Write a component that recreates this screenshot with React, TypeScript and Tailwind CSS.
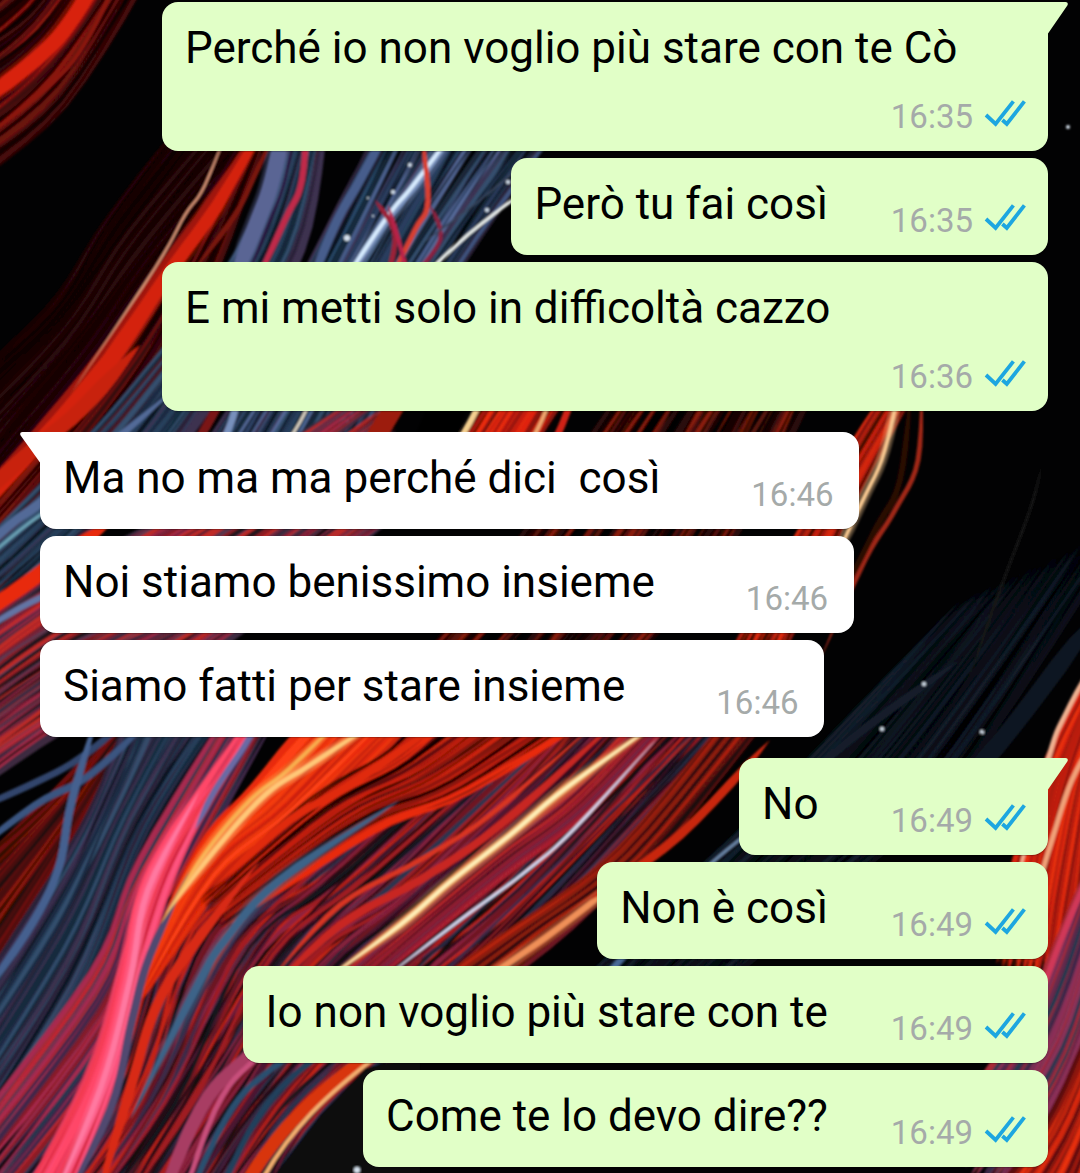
import React from "react";

type Pt = [number, number];

type Bundle = {
  from: Pt[];
  to: Pt[];
  count: number;
  width: [number, number];
  colors: string[];
};

type Strand = { pts: Pt[]; width: number; color: string; glow?: boolean };

type Message = {
  text: string;
  time: string;
  mine: boolean;
  first?: boolean;
};

const messages: Message[] = [
  { text: "Perché io non voglio più stare con te Cò", time: "16:35", mine: true, first: true },
  { text: "Però tu fai così", time: "16:35", mine: true },
  { text: "E mi metti solo in difficoltà cazzo", time: "16:36", mine: true },
  { text: "Ma no ma ma perché dici  così", time: "16:46", mine: false, first: true },
  { text: "Noi stiamo benissimo insieme", time: "16:46", mine: false },
  { text: "Siamo fatti per stare insieme", time: "16:46", mine: false },
  { text: "No", time: "16:49", mine: true, first: true },
  { text: "Non è così", time: "16:49", mine: true },
  { text: "Io non voglio più stare con te", time: "16:49", mine: true },
  { text: "Come te lo devo dire??", time: "16:49", mine: true },
];

const darkRed = ["#2a0506", "#4a0a0a", "#1a0405", "#6b120c", "#120304", "#350710"];
const red = ["#e02508", "#c41d08", "#8a1208", "#f03010", "#a81808", "#4a0a06"];
const blue = ["#3f5580", "#2a3d5e", "#566a9a", "#1a2538", "#0c1220", "#2b4f72"];
const navy = ["#1d2c42", "#283f5c", "#0d1420", "#34506e", "#2c2338", "#152c3c", "#3c3050"];
const pink = ["#e8304c", "#f04468", "#d42840", "#ff5580", "#f23a50", "#c83858"];
const mixed = ["#6e1824", "#a01c20", "#240a12", "#3a2a48", "#8c2440", "#17141f", "#c42418", "#4c1430", "#2a3550", "#0e090f"];
const faint = ["#0a1018", "#0d1622", "#060a10", "#121d2c", "#030405"];

const bundles: Bundle[] = [
  { from: [[-40, 30], [20, -15], [60, -60]], to: [[-40, 190], [65, 105], [165, -60]], count: 18, width: [4, 9], colors: [...darkRed, "#8a1208"] },
  { from: [[-50, 400], [50, 310], [110, 220], [200, 100]], to: [[-50, 530], [80, 370], [170, 250], [300, 100]], count: 24, width: [5, 9], colors: ["#1a0405", "#240608", "#120304", "#2c080a", "#0a0203"] },
  { from: [[-50, 535], [90, 372], [170, 262], [260, 110]], to: [[-50, 640], [120, 440], [200, 300], [275, 110]], count: 20, width: [4, 9], colors: darkRed.concat("#7a140c") },
  { from: [[-50, 575], [70, 460], [150, 370], [240, 250], [295, 110]], to: [[-50, 660], [150, 480], [230, 370], [300, 250], [330, 110]], count: 18, width: [5, 9], colors: [...navy, "#4a1420"] },
  { from: [[150, 530], [240, 390], [310, 262], [385, 110]], to: [[320, 530], [390, 390], [460, 262], [570, 110]], count: 28, width: [4, 9], colors: [...blue, ...navy] },
  { from: [[-50, 650], [60, 575], [200, 500], [380, 380]], to: [[-50, 810], [60, 730], [200, 660], [420, 500]], count: 34, width: [4, 8], colors: ["#7a2038", "#a82a48", "#8c1c24", "#3c2c40", "#c02c28", "#5c3850", "#24141e"] },
  { from: [[400, 680], [520, 540], [640, 370]], to: [[620, 680], [730, 540], [820, 370]], count: 22, width: [4, 9], colors: ["#140404", "#2a0808", "#8a1c08", "#050303", "#5a1208"] },
  { from: [[420, 500], [468, 425], [510, 360]], to: [[500, 500], [545, 425], [585, 360]], count: 14, width: [5, 8], colors: red },
  { from: [[725, 660], [820, 500], [900, 370]], to: [[780, 660], [855, 500], [925, 370]], count: 10, width: [4, 8], colors: ["#c82008", "#8a1608", "#3a0806", "#e02c10"] },
  { from: [[-50, 890], [60, 790], [150, 690]], to: [[-50, 1110], [70, 870], [150, 690]], count: 24, width: [6, 11], colors: ["#2c0806", "#4a0c08", "#701008", "#20080a", "#8c1808"] },
  { from: [[-50, 1040], [50, 880], [95, 800], [135, 690]], to: [[-50, 1200], [75, 1010], [150, 830], [245, 690]], count: 36, width: [4, 10], colors: navy },
  { from: [[-50, 1160], [90, 970], [140, 860], [240, 690]], to: [[-40, 1260], [110, 1070], [155, 940], [290, 690]], count: 16, width: [3, 8], colors: ["#8c1c28", "#402848", "#c02830", "#243850", "#a82c50"] },
  { from: [[0, 1240], [100, 1100], [160, 920], [240, 850], [450, 680]], to: [[250, 1240], [330, 1110], [460, 1010], [590, 900], [790, 680]], count: 84, width: [4, 9], colors: mixed },
  { from: [[135, 990], [200, 850], [255, 785], [335, 690]], to: [[142, 1000], [220, 885], [310, 820], [445, 690]], count: 26, width: [5, 10], colors: ["#e82c08", "#f03a10", "#c82408", "#ff4214", "#d42810"] },
  { from: [[200, 900], [310, 800], [390, 750], [450, 690]], to: [[220, 930], [370, 830], [470, 790], [630, 690]], count: 26, width: [4, 8], colors: ["#c82008", "#2a0806", "#100404", "#e82c10", "#5c0e08", "#8c1810"] },
  { from: [[330, 985], [490, 850], [570, 790], [665, 690]], to: [[340, 1010], [500, 880], [590, 810], [700, 690]], count: 14, width: [3, 6], colors: ["#8c1c30", "#c02c28", "#6a2848", "#a82030", "#38101c"] },
  { from: [[370, 1030], [500, 940], [620, 850], [750, 690]], to: [[440, 1030], [560, 930], [650, 860], [790, 690]], count: 18, width: [4, 8], colors: ["#14080c", "#5c120c", "#8c1c10", "#240a0c", "#b82410"] },
  { from: [[540, 1020], [700, 870], [800, 770], [960, 600]], to: [[680, 1020], [860, 870], [960, 780], [1130, 520]], count: 32, width: [3, 8], colors: faint },
  { from: [[990, 960], [1040, 780], [1095, 670]], to: [[1090, 1030], [1110, 800], [1130, 670]], count: 20, width: [7, 11], colors: ["#d82408", "#b81c0c", "#e83010", "#8c1408"] },
  { from: [[940, 1140], [1030, 1010], [1095, 850]], to: [[1000, 1210], [1080, 1070], [1110, 940]], count: 20, width: [5, 9], colors: ["#6a2848", "#402848", "#8c3058", "#243850", "#a82c38"] },
  { from: [[940, 1260], [1045, 1130], [1100, 1010]], to: [[1050, 1260], [1090, 1150], [1120, 1040]], count: 14, width: [5, 9], colors: ["#c82408", "#e83010", "#5c0e08", "#8c1810"] },
  { from: [[-5, 1240], [85, 1080], [130, 940], [165, 850], [225, 770], [265, 690]], to: [[50, 1240], [115, 1080], [148, 950], [175, 870], [208, 800], [268, 700]], count: 22, width: [5, 8], colors: pink },
];

const strands: Strand[] = [
  { pts: [[-50, 125], [35, 60], [75, 15], [110, -50]], width: 15, color: "#d82008", glow: true },
  { pts: [[-50, 165], [50, 85], [90, 35], [130, -50]], width: 4, color: "#8c1410" },
  { pts: [[-50, 550], [50, 430], [110, 360], [165, 275], [215, 205], [280, 100]], width: 17, color: "#d42408", glow: true },
  { pts: [[-50, 525], [50, 415], [110, 340], [165, 262], [210, 200], [275, 100]], width: 6, color: "#a01808" },
  { pts: [[70, 395], [155, 268], [185, 215], [205, 185], [235, 110]], width: 2, color: "#e8a080" },
  { pts: [[190, 275], [235, 215], [255, 175], [285, 110]], width: 5, color: "#7a160c" },
  { pts: [[226, 300], [258, 220], [272, 180], [290, 100]], width: 16, color: "#5a6594", glow: true },
  { pts: [[238, 300], [268, 225], [285, 180], [300, 100]], width: 3, color: "#2c1840" },
  { pts: [[248, 300], [285, 220], [302, 180], [308, 100]], width: 6, color: "#c02c48" },
  { pts: [[300, 310], [335, 225], [360, 180], [398, 110]], width: 9, color: "#465d8c" },
  { pts: [[325, 310], [385, 222], [415, 185], [470, 110]], width: 8, color: "#7890bc", glow: true },
  { pts: [[325, 310], [385, 220], [415, 183], [470, 110]], width: 4, color: "#d8ecff" },
  { pts: [[385, 285], [395, 235], [375, 200]], width: 5, color: "#9c2038" },
  { pts: [[385, 290], [415, 230], [428, 200], [420, 120]], width: 5, color: "#d84030" },
  { pts: [[410, 285], [400, 245], [388, 205]], width: 4, color: "#b82448" },
  { pts: [[405, 285], [440, 240], [430, 205]], width: 4, color: "#8c2040" },
  { pts: [[415, 285], [470, 233], [540, 180]], width: 3, color: "#eef2ee" },
  { pts: [[420, 245], [480, 200], [540, 150]], width: 2, color: "#39455c" },
  { pts: [[-50, 525], [30, 452], [80, 410], [140, 345]], width: 15, color: "#c82408" },
  { pts: [[-50, 580], [10, 525], [50, 495], [180, 385]], width: 9, color: "#536a98" },
  { pts: [[-50, 590], [20, 530], [70, 495]], width: 3, color: "#6aa0b4" },
  { pts: [[-50, 635], [20, 588], [50, 566], [120, 515]], width: 15, color: "#e82c10" },
  { pts: [[-50, 652], [20, 608], [80, 580]], width: 6, color: "#6474a4" },
  { pts: [[185, 460], [210, 420], [230, 380]], width: 9, color: "#7a1818" },
  { pts: [[215, 460], [232, 420], [242, 380]], width: 7, color: "#7890bc" },
  { pts: [[275, 460], [300, 422], [320, 380]], width: 3, color: "#d8d0c0" },
  { pts: [[355, 470], [385, 422], [415, 370]], width: 20, color: "#9c1c08" },
  { pts: [[410, 490], [440, 425], [470, 350]], width: 38, color: "#050303" },
  { pts: [[440, 470], [470, 422], [495, 370]], width: 6, color: "#f4d090" },
  { pts: [[520, 460], [542, 420], [560, 370]], width: 4, color: "#f0a870" },
  { pts: [[540, 470], [562, 425], [582, 370]], width: 7, color: "#d02418" },
  { pts: [[825, 580], [862, 502], [885, 450], [905, 360]], width: 4, color: "#f8c890", glow: true },
  { pts: [[820, 660], [865, 560], [895, 510], [918, 460], [922, 370]], width: 5, color: "#a02818" },
  { pts: [[830, 620], [875, 530], [900, 480], [912, 380]], width: 6, color: "#2a0806" },
  { pts: [[965, 690], [1000, 590], [1030, 510], [1042, 465]], width: 3, color: "#161616" },
  { pts: [[-50, 870], [35, 805], [90, 775], [160, 710]], width: 7, color: "#3b5480" },
  { pts: [[-50, 820], [30, 785], [80, 758], [140, 710]], width: 7, color: "#31456c" },
  { pts: [[-50, 1040], [25, 935], [58, 870], [72, 800], [105, 690]], width: 8, color: "#45608f" },
  { pts: [[20, 1230], [95, 1085], [125, 980], [140, 900], [175, 830], [270, 690]], width: 10, color: "#ff4668", glow: true },
  { pts: [[40, 1230], [100, 1090], [130, 980], [148, 890], [200, 790]], width: 6, color: "#ff78a0", glow: true },
  { pts: [[195, 830], [215, 790], [245, 745], [270, 700]], width: 6, color: "#6a6aa4" },
  { pts: [[50, 1230], [110, 1110], [132, 1020], [150, 955], [190, 870]], width: 8, color: "#514870" },
  { pts: [[85, 1240], [130, 1090], [155, 1010], [190, 950], [260, 860]], width: 10, color: "#d82c18" },
  { pts: [[130, 1120], [195, 990], [225, 940], [280, 880], [400, 800]], width: 8, color: "#3d6488", glow: true },
  { pts: [[145, 1240], [200, 1110], [250, 1055], [340, 980]], width: 13, color: "#a83c64" },
  { pts: [[170, 1240], [215, 1110], [260, 1055], [350, 985]], width: 5, color: "#c8507c" },
  { pts: [[170, 1240], [225, 1120], [270, 1070], [360, 1010]], width: 6, color: "#2c5070" },
  { pts: [[200, 1240], [250, 1130], [300, 1070], [400, 1000]], width: 6, color: "#24405c" },
  { pts: [[250, 1010], [340, 925], [420, 880], [500, 825], [640, 700]], width: 8, color: "#c82820" },
  { pts: [[270, 980], [340, 905], [420, 860], [490, 815], [600, 720]], width: 5, color: "#d83424" },
  { pts: [[160, 925], [205, 853], [250, 800], [290, 768], [360, 700]], width: 4, color: "#f8b050", glow: true },
  { pts: [[165, 915], [215, 850], [265, 795], [310, 765], [410, 700]], width: 5, color: "#ffc878", glow: true },
  { pts: [[210, 890], [290, 820], [350, 785], [460, 710]], width: 8, color: "#e02c10" },
  { pts: [[325, 980], [400, 925], [450, 882], [510, 835], [570, 785], [690, 700]], width: 8, color: "#e89858", glow: true },
  { pts: [[325, 980], [400, 925], [450, 882], [510, 835], [570, 785], [690, 700]], width: 4, color: "#fff0b8" },
  { pts: [[375, 985], [460, 920], [525, 872], [575, 828], [660, 735]], width: 3, color: "#d4d8f0" },
  { pts: [[460, 995], [545, 938], [640, 865]], width: 6, color: "#f09058", glow: true },
  { pts: [[590, 900], [680, 835], [770, 740]], width: 9, color: "#c82810" },
  { pts: [[670, 905], [715, 860], [790, 800]], width: 3, color: "#6c86a8" },
  { pts: [[590, 995], [625, 955], [670, 910]], width: 6, color: "#4a6a98" },
  { pts: [[760, 820], [850, 740], [960, 660]], width: 8, color: "#121c2b" },
  { pts: [[940, 810], [1010, 730], [1100, 610]], width: 18, color: "#0e1622" },
  { pts: [[1010, 910], [1048, 760], [1065, 715], [1100, 650]], width: 5, color: "#f0b090" },
  { pts: [[1025, 930], [1052, 840], [1072, 780], [1100, 730]], width: 5, color: "#f0a078" },
  { pts: [[1035, 1010], [1065, 930], [1100, 850]], width: 6, color: "#d03858" },
];

const embers: [number, number, number][] = [
  [1068, 127, 2],
  [924, 684, 2],
  [882, 729, 2],
  [982, 732, 2],
  [487, 210, 2],
  [508, 182, 2],
  [368, 198, 1],
  [393, 192, 2],
  [347, 238, 3],
  [373, 216, 1],
  [410, 165, 2],
  [357, 1170, 3],
];

/* Small deterministic generator, so the wallpaper is the same on each render. */
function makeRandom(seed: number) {
  let state = seed;
  return () => {
    state = (state * 1664525 + 1013904223) % 4294967296;
    return state / 4294967296;
  };
}

/* Catmull-Rom sampling of a guide curve. */
function sample(pts: Pt[], steps = 6): Pt[] {
  const out: Pt[] = [];
  for (let i = 0; i < pts.length - 1; i++) {
    const p0 = pts[Math.max(0, i - 1)];
    const p1 = pts[i];
    const p2 = pts[i + 1];
    const p3 = pts[Math.min(pts.length - 1, i + 2)];
    for (let s = 0; s < steps; s++) {
      const t = s / steps;
      const at = (k: 0 | 1) =>
        0.5 *
        (2 * p1[k] +
          (p2[k] - p0[k]) * t +
          (2 * p0[k] - 5 * p1[k] + 4 * p2[k] - p3[k]) * t * t +
          (3 * p1[k] - p0[k] - 3 * p2[k] + p3[k]) * t * t * t);
      out.push([at(0), at(1)]);
    }
  }
  out.push(pts[pts.length - 1]);
  return out;
}

/* Closed ribbon along the curve that narrows to a point at both ends. */
function ribbon(pts: Pt[], width: number) {
  const line = sample(pts);
  const last = line.length - 1;
  const left: string[] = [];
  const right: string[] = [];
  line.forEach((p, i) => {
    const a = line[Math.max(0, i - 1)];
    const b = line[Math.min(last, i + 1)];
    const dx = b[0] - a[0];
    const dy = b[1] - a[1];
    const len = Math.hypot(dx, dy) || 1;
    const half = (width / 2) * Math.min(1, (i / last) * 5, (1 - i / last) * 5);
    const nx = (-dy / len) * half;
    const ny = (dx / len) * half;
    left.push(`${(p[0] + nx).toFixed(1)} ${(p[1] + ny).toFixed(1)}`);
    right.unshift(`${(p[0] - nx).toFixed(1)} ${(p[1] - ny).toFixed(1)}`);
  });
  return `M${left.concat(right).join("L")}Z`;
}

function expand(bundle: Bundle, seed: number): Strand[] {
  const random = makeRandom(seed * 7919 + 13);
  const out: Strand[] = [];
  const total = bundle.count * 3;
  for (let i = 0; i < total; i++) {
    const fine = i >= bundle.count;
    const base = fine ? random() : i / (bundle.count - 1);
    const pts = bundle.from.map((p, k): Pt => {
      const t = base + (random() - 0.5) * 0.07;
      const q = bundle.to[k];
      return [p[0] + (q[0] - p[0]) * t, p[1] + (q[1] - p[1]) * t];
    });
    const [lo, hi] = bundle.width;
    out.push({
      pts,
      width: fine ? 1 + random() * 3 : lo + 1 + random() * (hi - lo),
      color: bundle.colors[Math.floor(random() * bundle.colors.length)],
    });
  }
  return out;
}

const field = bundles.flatMap((b, i) => expand(b, i + 1));

function Wallpaper() {
  return (
    <svg
      aria-hidden="true"
      className="absolute inset-0 h-full w-full"
      viewBox="0 0 1080 1173"
      preserveAspectRatio="xMidYMid slice"
      fill="none"
    >
      <defs>
        <filter id="soft" x="0" y="0" width="1080" height="1173" filterUnits="userSpaceOnUse">
          <feGaussianBlur stdDeviation="0.9" />
        </filter>
      </defs>
      <rect width="1080" height="1173" fill="#020203" />
      <g filter="url(#soft)">
        {field.map((s, i) => (
          <path key={i} d={ribbon(s.pts, s.width)} fill={s.color} />
        ))}
        <path d="M270 1180L320 1115L365 1068L420 1055V1180Z" fill="#070910" />
        <path d="M245 1185C275 1135 310 1095 385 1045" stroke="#d83410" strokeWidth="13" />
        <path d="M262 1180C290 1130 325 1095 385 1050" stroke="#f4b070" strokeWidth="4" />
        {strands.map((s, i) => (
          <g key={i} fill={s.color}>
            {s.glow && <path d={ribbon(s.pts, s.width + 7)} opacity="0.35" />}
            <path d={ribbon(s.pts, s.width)} />
          </g>
        ))}
        {embers.map(([x, y, r], i) => (
          <circle key={i} cx={x} cy={y} r={r} fill="#d8e4f0" />
        ))}
      </g>
    </svg>
  );
}

function ReadTicks() {
  return (
    <svg
      role="img"
      aria-label="Read"
      className="mb-2.5 ml-[11px] h-7 w-[42px] shrink-0"
      viewBox="0 0 42 28"
      fill="none"
      stroke="#1da6e0"
      strokeWidth="3.8"
    >
      <path d="M2 16L11.6 25L29.4 2.4" />
      <path d="M18.4 21L22.8 25L40.4 2.4" />
    </svg>
  );
}

function Tail({ mine }: { mine: boolean }) {
  return mine ? (
    <svg aria-hidden="true" className="absolute top-0 left-full h-8 w-5 text-[#e1ffc7]" viewBox="0 0 20 32">
      <path d="M-1 0H17.5C20 0 20.4 2.2 19 4L0 31.5H-1Z" fill="currentColor" />
    </svg>
  ) : (
    <svg aria-hidden="true" className="absolute top-0 right-full h-8 w-5 text-white" viewBox="0 0 20 32">
      <path d="M21 0H2.5C0 0 -0.4 2.2 1 4L20 30.5H21Z" fill="currentColor" />
    </svg>
  );
}

function Bubble({ message }: { message: Message }) {
  const { text, time, mine, first } = message;
  const side = mine
    ? "self-end bg-[#e1ffc7] pr-[22px] gap-x-[63px]"
    : "self-start bg-white pr-[26px] gap-x-[91px]";
  const corner = first ? (mine ? "rounded-tr-none" : "rounded-tl-none") : "";
  return (
    <li
      className={`relative flex max-w-[886px] min-w-[309px] flex-wrap items-end rounded-2xl pt-5 pb-3.5 pl-[23px] shadow-[0_1px_1px_rgba(0,0,0,0.25)] ${side} ${corner}`}
    >
      {first && <Tail mine={mine} />}
      <p className="pb-[11px] text-[44px] leading-[52px] whitespace-pre-wrap text-black">{text}</p>
      <div className="ml-auto flex h-[52px] items-end">
        <time className="text-[33px] leading-10 text-[#a5aaa9]">{time}</time>
        {mine && <ReadTicks />}
      </div>
    </li>
  );
}

export default function App() {
  return (
    <main className="relative isolate min-h-screen overflow-hidden bg-black font-['Roboto',sans-serif]">
      <Wallpaper />
      <ol className="relative flex flex-col gap-[7px] pt-0.5 pr-8 pb-1.5 pl-10">
        {messages.map((message, i) => (
          <React.Fragment key={i}>
            {i > 0 && message.first && <li aria-hidden="true" className="h-[7px]" />}
            <Bubble message={message} />
          </React.Fragment>
        ))}
      </ol>
    </main>
  );
}
